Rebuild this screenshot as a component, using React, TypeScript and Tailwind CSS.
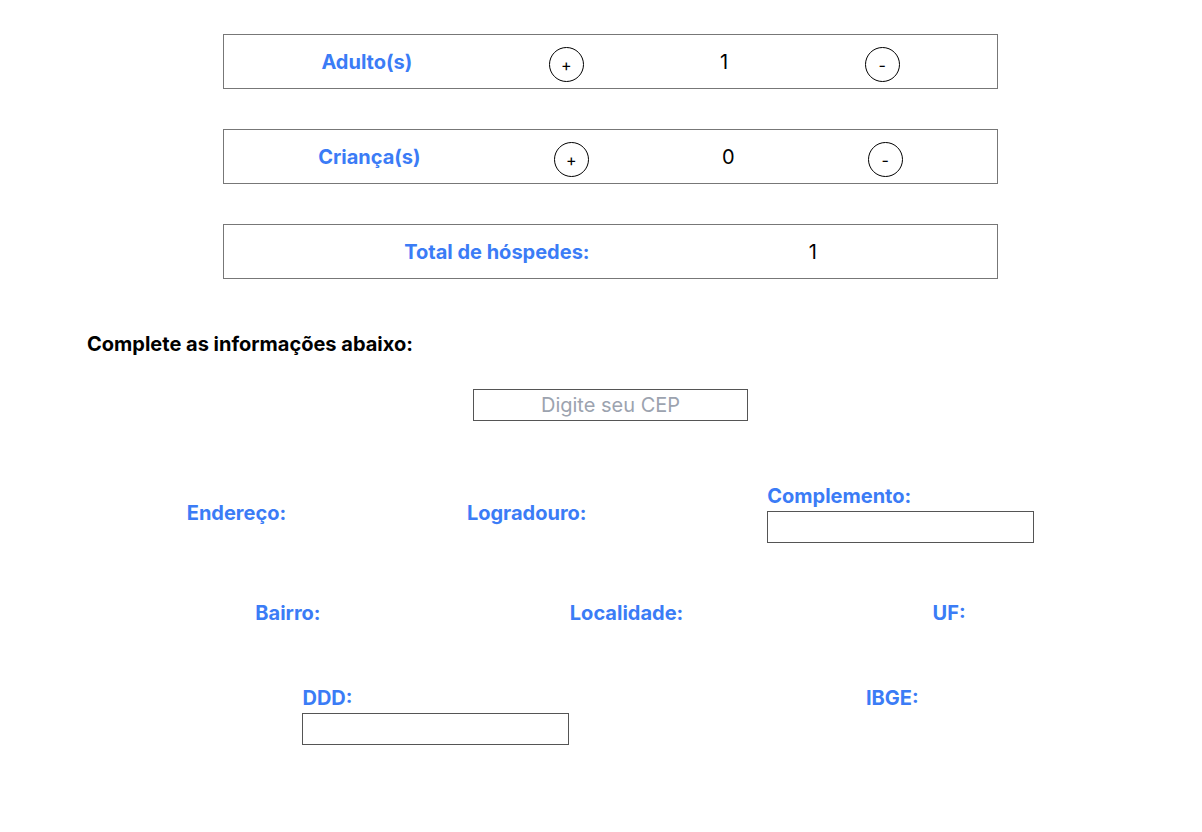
import React from "react";

const blue = "text-[#3b7cf6]";

function Counter({ label, value }: { label: string; value: number }) {
  return (
    <div className="mx-auto flex h-[55px] w-[775px] items-center justify-evenly border border-[#777]">
      <span className={`mx-[39px] text-[20px] font-bold leading-7 ${blue}`}>{label}</span>
      <button className="mx-[39px] mt-[6px] flex h-[35px] w-[35px] items-center justify-center rounded-full border border-black text-[16px] leading-none text-black">
        +
      </button>
      <span className="mx-[39px] text-[20px] leading-7 text-black">{value}</span>
      <button className="mx-[39px] mt-[6px] flex h-[35px] w-[35px] items-center justify-center rounded-full border border-black text-[16px] leading-none text-black">
        -
      </button>
    </div>
  );
}

function Label({ children }: { children: React.ReactNode }) {
  return <span className={`text-[20px] font-bold leading-7 ${blue}`}>{children}</span>;
}

export default function App() {
  return (
    <div className="w-[1202px] overflow-hidden bg-white" style={{ fontFamily: "Inter, 'Noto Sans', sans-serif" }}>
      <div className="ml-[6px] w-[1209px] pt-[34px] pb-[80px]">
        <div className="flex flex-col gap-[40px]">
          <Counter label="Adulto(s)" value={1} />
          <Counter label="Criança(s)" value={0} />
          <div className="mx-auto flex h-[55px] w-[775px] items-center justify-evenly border border-[#777]">
            <span className={`mx-[39px] text-[20px] font-bold leading-7 ${blue}`}>Total de hóspedes:</span>
            <span className="mx-[39px] text-[20px] leading-7 text-black">1</span>
          </div>
        </div>

        <h2 className="mt-[51px] pl-[81px] text-[20px] font-bold leading-7 text-black">
          Complete as informações abaixo:
        </h2>

        <div className="mt-[31px] flex justify-center">
          <input
            className="h-[32px] w-[275px] border border-[#555] text-center text-[20px] text-black outline-none placeholder:text-[#9ca3af]"
            placeholder="Digite seu CEP"
          />
        </div>

        <div className="mt-[61px] flex items-center justify-evenly">
          <Label>Endereço:</Label>
          <Label>Logradouro:</Label>
          <div className="flex flex-col">
            <Label>Complemento:</Label>
            <input className="mt-px h-[32px] w-[267px] border border-[#555] outline-none" />
          </div>
        </div>

        <div className="mt-[56px] flex items-center justify-evenly">
          <Label>Bairro:</Label>
          <Label>Localidade:</Label>
          <Label>UF:</Label>
        </div>

        <div className="mt-[57px] flex items-start justify-evenly">
          <div className="flex flex-col">
            <Label>DDD:</Label>
            <input className="mt-px h-[32px] w-[267px] border border-[#555] outline-none" />
          </div>
          <Label>IBGE:</Label>
        </div>
      </div>
    </div>
  );
}
